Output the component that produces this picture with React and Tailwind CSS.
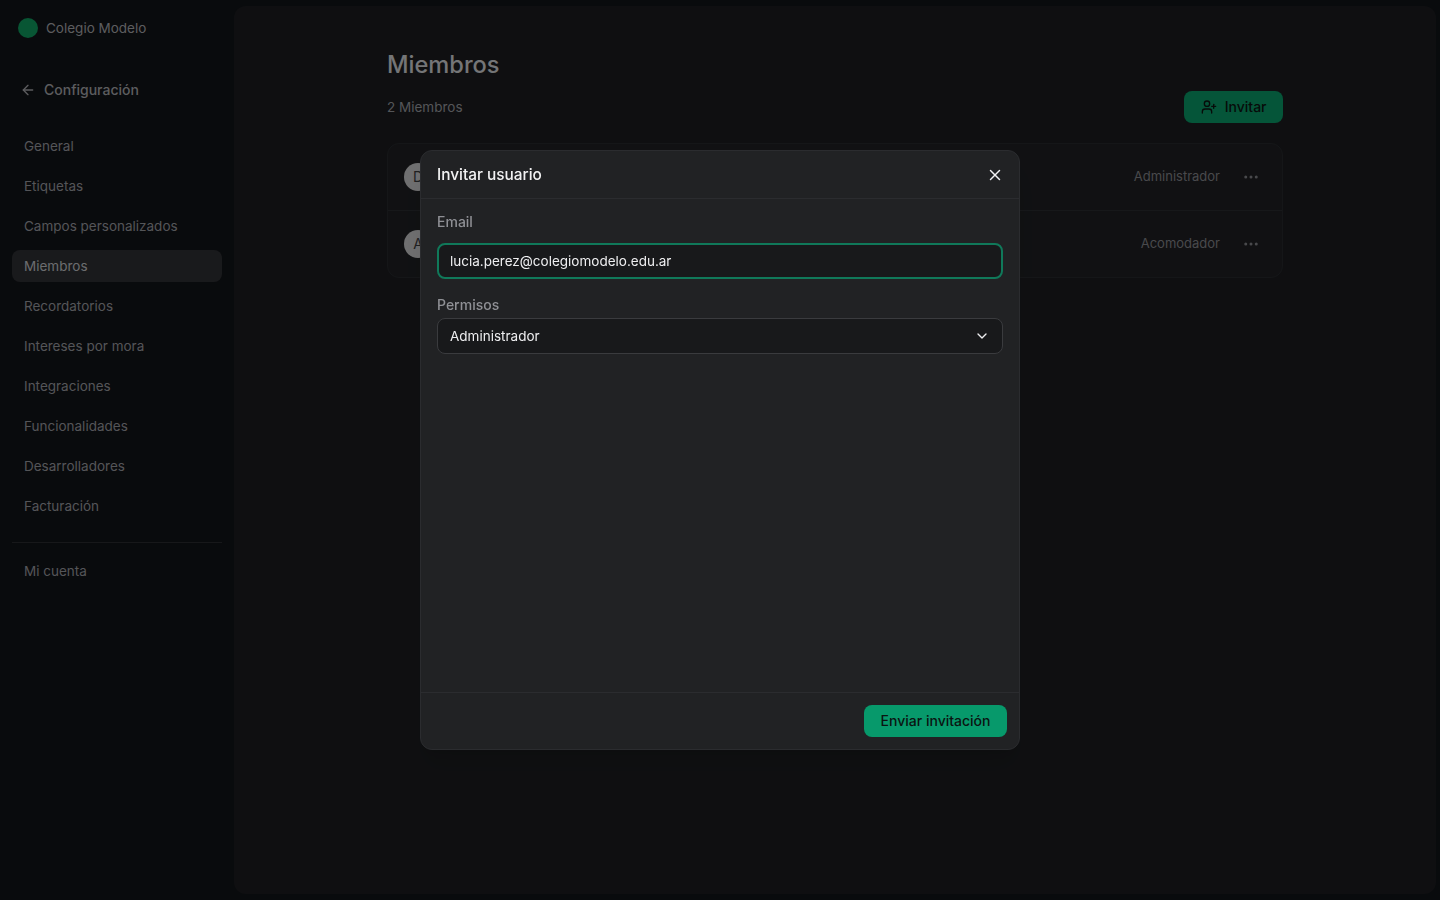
import { ArrowLeft, ChevronDown, Ellipsis, UserPlus, X } from "lucide-react";

const menu = [
  "General",
  "Etiquetas",
  "Campos personalizados",
  "Miembros",
  "Recordatorios",
  "Intereses por mora",
  "Integraciones",
  "Funcionalidades",
  "Desarrolladores",
  "Facturación",
];

const members = [
  { initial: "D", role: "Administrador" },
  { initial: "A", role: "Acomodador" },
];

function Sidebar() {
  return (
    <aside className="w-[234px] shrink-0 px-3">
      <div className="flex h-14 items-center gap-2 px-1.5">
        <div className="h-5 w-5 rounded-full bg-[#0f9d5f]"></div>
        <span className="text-[13.5px] text-[#a8a9ad]">Colegio Modelo</span>
      </div>
      <div className="mt-4 flex h-9 items-center gap-2 pl-2 text-[#a8a9ad]">
        <ArrowLeft size={16} strokeWidth={2} />
        <span className="text-sm font-medium">Configuración</span>
      </div>
      <nav className="mt-[22px] flex flex-col gap-2">
        {menu.map((item) => (
          <a
            key={item}
            className={`flex h-8 items-center rounded-lg px-3 text-[13.5px] ${
              item === "Miembros"
                ? "bg-[#2e3034] text-[#c4c5c9]"
                : "text-[#9a9ba0]"
            }`}
          >
            {item}
          </a>
        ))}
      </nav>
      <div className="mt-5 border-t border-[#2a2c30]"></div>
      <a className="mt-3 flex h-8 items-center px-3 text-[13.5px] text-[#9a9ba0]">
        Mi cuenta
      </a>
    </aside>
  );
}

function Members() {
  return (
    <main className="my-1.5 mr-1 flex-1 rounded-xl bg-[#1c1d20]">
      <div className="mx-auto w-[896px] pt-[41px]">
        <h1 className="text-[23.6px] font-medium leading-9 text-[#d4d5d9]">Miembros</h1>
        <div className="mt-2 flex h-8 items-center justify-between">
          <span className="text-[13.5px] text-[#9a9ba0]">2 Miembros</span>
          <button className="flex h-8 items-center gap-2 rounded-lg bg-[#0a9b68] px-[16.5px] text-sm font-medium text-[#0d1512]">
            <UserPlus size={16} />
            Invitar
          </button>
        </div>
        <div className="mt-5 rounded-xl border border-[#27292d] bg-[#1f2023]">
          {members.map((member, i) => (
            <div
              key={member.initial}
              className={`flex items-center px-4 ${
                i > 0 ? "h-[67px] border-t border-[#2a2c30]" : "h-[66px]"
              }`}
            >
              <div className="flex h-7 w-7 items-center justify-center rounded-full bg-[#cacacc] text-sm text-[#3a3b3e]">
                {member.initial}
              </div>
              <span className="ml-auto text-[13px] text-[#85868b]">{member.role}</span>
              <Ellipsis size={18} className="ml-[22px] mr-[6px] text-[#85868b]" />
            </div>
          ))}
        </div>
      </div>
    </main>
  );
}

function InviteModal() {
  return (
    <div className="fixed inset-0 flex items-center justify-center bg-black/45">
      <div className="flex h-[600px] w-[600px] flex-col rounded-xl border border-[#2b2c2f] bg-[#212224] shadow-xl">
        <div className="flex h-12 shrink-0 items-center justify-between border-b border-[#2b2c2f] pl-4 pr-[15px]">
          <h2 className="text-[15.4px] font-medium text-[#f2f2f3]">Invitar usuario</h2>
          <X size={18} strokeWidth={2} className="text-[#f2f2f3]" />
        </div>
        <div className="flex-1 px-4 pt-[13px]">
          <label className="block text-sm font-medium leading-5 text-[#8f9095]">Email</label>
          <div className="mt-[11px] flex h-9 items-center rounded-lg border-2 border-[#10795a] bg-[#18191b] px-[11px] text-[13.5px] text-[#eeeef0]">
            lucia.perez@colegiomodelo.edu.ar
          </div>
          <label className="mt-4 block text-sm font-medium leading-5 text-[#8f9095]">Permisos</label>
          <div className="mt-[3px] flex h-9 items-center justify-between rounded-lg border border-[#3a3b3e] bg-[#18191b] pl-3 pr-3 text-[13.5px] text-[#eeeef0]">
            Administrador
            <ChevronDown size={16} strokeWidth={2} />
          </div>
        </div>
        <div className="flex h-[57px] shrink-0 items-center justify-end border-t border-[#2b2c2f] pr-3">
          <button className="h-8 rounded-lg bg-[#07996b] px-[16.5px] text-sm font-medium text-[#0b1411]">
            Enviar invitación
          </button>
        </div>
      </div>
    </div>
  );
}

export default function App() {
  return (
    <div className="flex h-screen overflow-hidden bg-[#121418] font-['Inter',sans-serif]">
      <Sidebar />
      <Members />
      <InviteModal />
    </div>
  );
}
